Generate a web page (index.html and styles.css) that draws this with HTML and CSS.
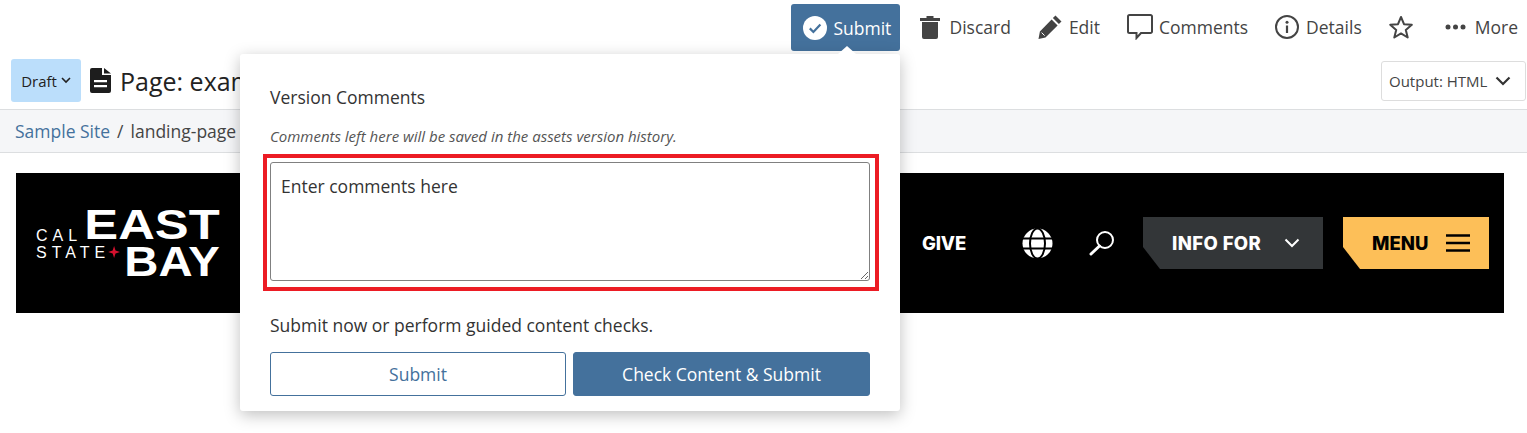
FILE: index.html
```html
<!DOCTYPE html>
<html>
<head>
    <title>Page: example</title>
    <link rel="stylesheet" href="styles.css">
</head>
<body>
    <div class="toolbar">
        <div class="tool tool-submit">
            <svg class="ico" width="24" height="24" viewBox="0 0 24 24"><circle cx="12" cy="12" r="12" fill="#fff"/><path d="M6.8 12.4l3.6 3.6 7-7.6" fill="none" stroke="#44719c" stroke-width="2.2"/></svg>
            <span>Submit</span>
        </div>
        <div class="tool tool-discard">
            <svg class="ico" width="20" height="24" viewBox="0 0 20 24"><path d="M0 3h6.5V1h7v2H20v3H0zM2 7h16v15a2 2 0 0 1-2 2H4a2 2 0 0 1-2-2z" fill="#444"/></svg>
            <span>Discard</span>
        </div>
        <div class="tool tool-edit">
            <svg class="ico" width="24" height="24" viewBox="0 0 24 24"><path d="M17.5 0.5l6 6-2.6 2.6-6-6zM13.6 4.4l6 6L7.5 22.5 0.5 24l1.4-7.4z" fill="#444"/><path d="M3.6 17.6l3 3" stroke="#fff" stroke-width="1"/></svg>
            <span>Edit</span>
        </div>
        <div class="tool tool-comments">
            <svg class="ico" width="26" height="26" viewBox="0 0 26 26"><path d="M2.5 1h21a1.500 1.500 0 0 1 1.500 1.500v15a1.500 1.500 0 0 1-1.500 1.500H14l-4.500 5v-5h-7A1.500 1.500 0 0 1 1 17.500v-15A1.500 1.500 0 0 1 2.500 1z" fill="none" stroke="#444" stroke-width="2"/></svg>
            <span>Comments</span>
        </div>
        <div class="tool tool-details">
            <svg class="ico" width="24" height="24" viewBox="0 0 24 24"><circle cx="12" cy="12" r="11" fill="none" stroke="#444" stroke-width="2"/><circle cx="12" cy="7.300" r="1.500" fill="#444"/><path d="M12 10.500v7.500" stroke="#444" stroke-width="2.200"/></svg>
            <span>Details</span>
        </div>
        <div class="tool tool-star">
            <svg class="ico" width="24" height="24" viewBox="0 0 24 24"><path d="M12 2l3 7.200 7.800.6-6 5.100 1.900 7.600L12 18.400l-6.700 4.100 1.900-7.600-6-5.100L9 9.200z" fill="none" stroke="#444" stroke-width="2" stroke-linejoin="round"/></svg>
        </div>
        <div class="tool tool-more">
            <svg class="ico" width="21" height="6" viewBox="0 0 21 6"><circle cx="3" cy="3" r="2.500" fill="#444"/><circle cx="10.500" cy="3" r="2.500" fill="#444"/><circle cx="18" cy="3" r="2.500" fill="#444"/></svg>
            <span>More</span>
        </div>
    </div>

    <div class="title-row">
        <div class="draft">Draft
            <svg width="10" height="7" viewBox="0 0 10 7"><path d="M1 1l4 4 4-4" fill="none" stroke="#222" stroke-width="1.600"/></svg>
        </div>
        <svg class="doc-icon" width="21" height="25" viewBox="0 0 21 25"><path d="M2 0h10v7h9v16a2 2 0 0 1-2 2H2a2 2 0 0 1-2-2V2a2 2 0 0 1 2-2zM14 0l7 5.500h-7zM4 12v2.200h13V12zM4 17v2.200h13V17z" fill="#1d1d1d" fill-rule="evenodd"/></svg>
        <h1 class="page-title">Page: example</h1>
        <div class="output-select">Output: HTML
            <svg width="16" height="10" viewBox="0 0 16 10"><path d="M1.500 1.500L8 8l6.500-6.500" fill="none" stroke="#333" stroke-width="2.200"/></svg>
        </div>
    </div>

    <div class="crumbs">
        <a class="crumb-link">Sample Site</a>
        <span class="crumb-sep">/</span>
        <span>landing-page</span>
    </div>

    <div class="content">
        <div class="banner">
            <div class="logo">
                <div class="logo-small">
                    <span class="logo-cal">CAL</span>
                    <span class="logo-state">STATE<i class="logo-star"></i></span>
                </div>
                <div class="logo-big">
                    <span class="logo-east">EAST</span>
                    <span class="logo-bay">BAY</span>
                </div>
            </div>
            <div class="banner-nav">
                <span class="give">GIVE</span>
                <svg class="globe" width="31" height="31" viewBox="0 0 31 31"><circle cx="15.500" cy="15.500" r="15" fill="#fff"/><path d="M0 10.500h31M0 20.500h31" stroke="#000" stroke-width="2"/><ellipse cx="15.500" cy="15.500" rx="7.500" ry="15" fill="none" stroke="#000" stroke-width="2"/></svg>
                <svg class="search" width="26" height="26" viewBox="0 0 26 26"><circle cx="16" cy="10" r="8" fill="none" stroke="#fff" stroke-width="2"/><path d="M10.500 16L2 24" stroke="#fff" stroke-width="3" stroke-linecap="round"/></svg>
                <div class="cut-btn info-btn">INFO FOR
                    <svg width="16" height="10" viewBox="0 0 16 10"><path d="M1.500 1.500L8 8l6.500-6.500" fill="none" stroke="#fff" stroke-width="2"/></svg>
                </div>
                <div class="cut-btn menu-btn">MENU
                    <svg width="24" height="18" viewBox="0 0 24 18"><path d="M0 1.500h24M0 9h24M0 16.500h24" stroke="#000" stroke-width="2.400"/></svg>
                </div>
            </div>
        </div>
    </div>

    <div class="popover">
        <i class="popover-arrow"></i>
        <div class="pop-heading">Version Comments</div>
        <div class="pop-hint">Comments left here will be saved in the assets version history.</div>
        <div class="highlight">
            <textarea class="comment-box">Enter comments here</textarea>
        </div>
        <div class="pop-note">Submit now or perform guided content checks.</div>
        <div class="pop-actions">
            <button class="btn btn-outline">Submit</button>
            <button class="btn btn-solid">Check Content &amp; Submit</button>
        </div>
    </div>
</body>
</html>
```

FILE: styles.css
```css
* { box-sizing: border-box; }
html, body { height: 100%; }
body {
    margin: 0;
    font-family: "Open Sans", sans-serif;
    color: #333;
    background: #fff;
    overflow: hidden;
}

.toolbar {
    display: flex;
    justify-content: flex-end;
    align-items: center;
    height: 54px;
    padding-right: 9px;
    font-size: 17.5px;
    color: #444;
}
.tool {
    display: flex;
    align-items: center;
}
.tool-submit {
    height: 47px;
    width: 109px;
    padding-left: 12px;
    gap: 6px;
    margin-top: 1px;
    color: #fff;
    background: #44719c;
    border-radius: 3px;
}
.tool-discard { margin-left: 20px; gap: 9px; }
.tool-edit { margin-left: 27px; gap: 7px; }
.tool-comments { margin-left: 27px; gap: 6px; }
.tool-details { margin-left: 27px; gap: 7px; }
.tool-star { margin-left: 27px; }
.tool-more { margin-left: 32px; gap: 9px; }

.title-row {
    display: flex;
    align-items: center;
    height: 56px;
    padding: 0 1px 2px 11px;
    border-bottom: 1px solid #dcdee0;
}
.draft {
    display: flex;
    align-items: center;
    justify-content: center;
    gap: 4px;
    width: 70px;
    height: 43px;
    font-size: 15px;
    color: #222;
    background: #bbdefb;
    border-radius: 3px;
}
.doc-icon { margin-left: 9px; }
.page-title {
    margin: 0 0 0 9px;
    font-size: 25px;
    font-weight: 400;
    color: #222;
}
.output-select {
    display: flex;
    align-items: center;
    justify-content: space-between;
    width: 145px;
    height: 40px;
    margin-left: auto;
    padding: 0 14px 0 7px;
    font-size: 15px;
    color: #444;
    border: 1px solid #ddd;
    border-radius: 3px;
}

.crumbs {
    display: flex;
    align-items: center;
    gap: 7px;
    height: 43px;
    padding-left: 15px;
    font-size: 17.5px;
    color: #444;
    background: #f5f6f8;
    border-bottom: 1px solid #dcdee0;
}
.crumb-link { color: #44719c; }

.content { padding: 20px 23px 0 16px; }
.banner {
    display: flex;
    justify-content: space-between;
    align-items: center;
    height: 140px;
    padding: 0 15px 0 20px;
    background: #000;
    color: #fff;
    font-family: Inter, sans-serif;
}

.logo {
    display: flex;
    align-items: center;
    font-family: "Liberation Sans", sans-serif;
    font-weight: 700;
}
.logo-small {
    display: flex;
    flex-direction: column;
    width: 84px;
    margin-top: 1px;
    font-size: 16px;
    line-height: 17px;
    font-weight: 400;
    letter-spacing: 5px;
}
.logo-state { display: flex; align-items: center; }
.logo-star {
    width: 12px;
    height: 12px;
    margin-left: -2px;
    background: #d5112e;
    clip-path: polygon(50% 0, 62% 38%, 100% 50%, 62% 62%, 50% 100%, 38% 62%, 0 50%, 38% 38%);
}
.logo-big {
    display: flex;
    flex-direction: column;
    align-items: flex-end;
    margin-left: -15px;
    font-size: 43px;
    line-height: 37px;
}
.logo-east { transform: scaleX(1.18); transform-origin: right; }
.logo-bay { transform: scaleX(1.1); transform-origin: right; }

.banner-nav {
    display: flex;
    align-items: center;
    font-weight: 800;
    font-size: 18.5px;
}
.give { letter-spacing: -0.2px; }
.globe { margin-left: 56px; }
.search { margin-left: 36px; }
.cut-btn {
    display: flex;
    align-items: center;
    height: 52px;
    clip-path: polygon(0 0, 100% 0, 100% 100%, 17px 100%, 0 30px);
}
.info-btn {
    justify-content: space-between;
    width: 180px;
    margin-left: 28px;
    padding: 0 23px 0 29px;
    letter-spacing: 0.4px;
    background: #333638;
}
.menu-btn {
    justify-content: space-between;
    width: 146px;
    margin-left: 20px;
    padding: 0 19px 0 29px;
    color: #000;
    background: #fdbf58;
}

.popover {
    position: absolute;
    left: 240px;
    top: 54px;
    width: 660px;
    height: 357px;
    padding: 30px 30px 0;
    background: #fff;
    border-radius: 3px;
    box-shadow: 0 4px 16px rgba(0, 0, 0, 0.25);
}
.popover-arrow {
    position: absolute;
    top: -8px;
    right: 44px;
    width: 0;
    height: 0;
    border-left: 9px solid transparent;
    border-right: 9px solid transparent;
    border-bottom: 8px solid #fff;
}
.pop-heading {
    font-size: 17.5px;
    line-height: 27px;
    color: #333;
}
.pop-hint {
    margin-top: 15px;
    font-size: 15px;
    line-height: 20px;
    font-style: italic;
    color: #555;
}
.highlight {
    width: 616px;
    height: 137px;
    margin: 8px 0 0 -7px;
    padding: 4px 5px 4px 3px;
    border: 4px solid #ec1c24;
}
.comment-box {
    display: block;
    width: 600px;
    height: 119px;
    padding: 11px 10px;
    font-family: "Open Sans", sans-serif;
    font-size: 17.5px;
    line-height: 24px;
    color: #333;
    background: #fff;
    border: 1px solid #808080;
    border-radius: 3px;
    outline: none;
}
.pop-note {
    margin-top: 21px;
    font-size: 17.5px;
    line-height: 26px;
    color: #333;
}
.pop-actions {
    display: flex;
    gap: 7px;
    margin-top: 14px;
}
.btn {
    height: 44px;
    font-family: "Open Sans", sans-serif;
    font-size: 17.5px;
    border: 1px solid #44719c;
    border-radius: 3px;
}
.btn-outline { width: 296px; color: #44719c; background: #fff; }
.btn-solid { width: 297px; color: #fff; background: #44719c; }
```
